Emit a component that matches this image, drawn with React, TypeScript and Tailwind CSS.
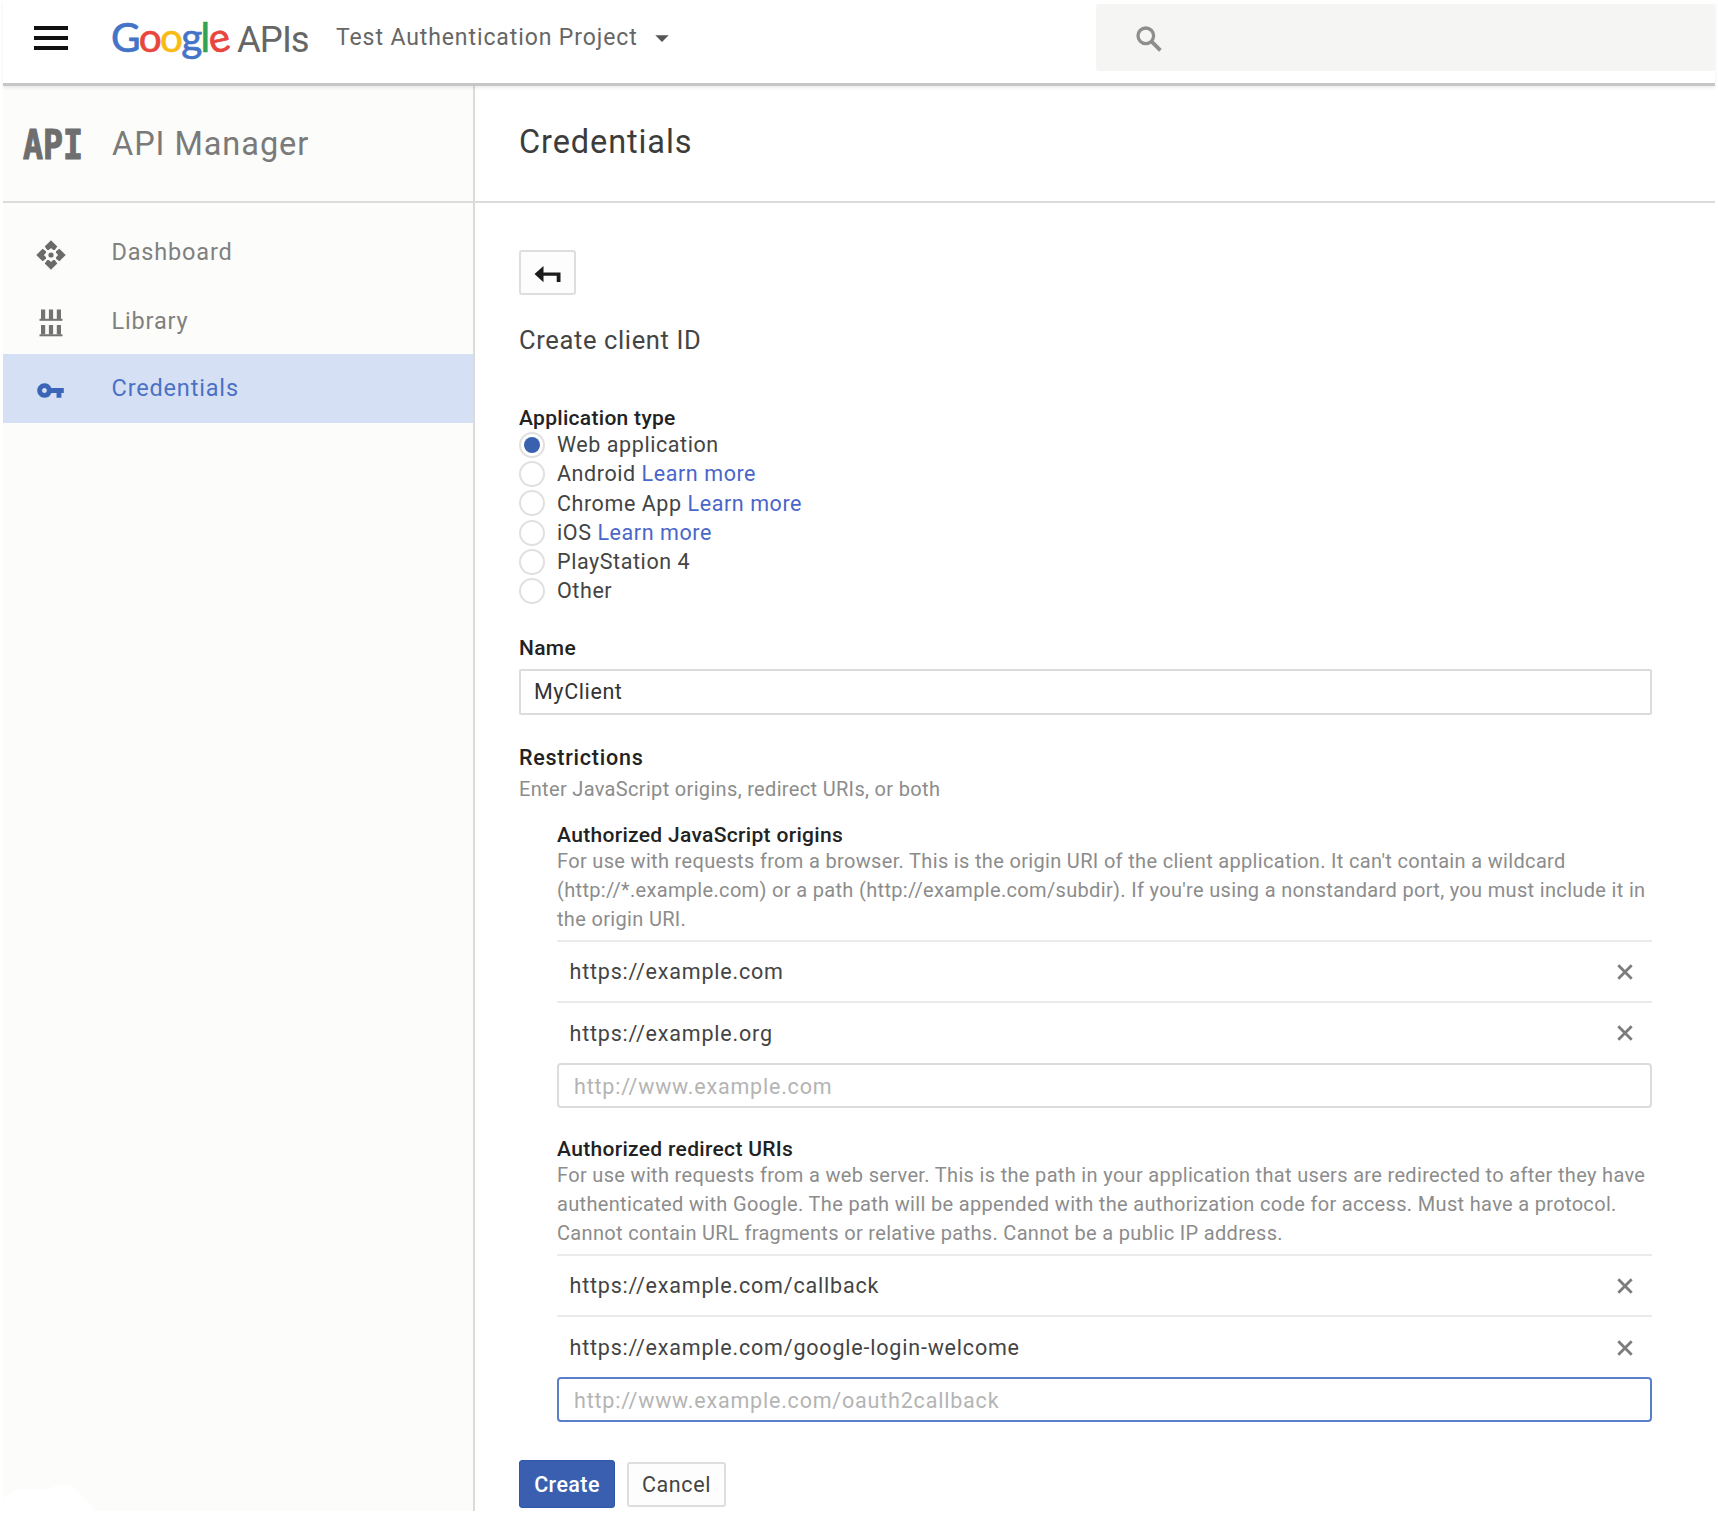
import React from "react";
import { MdVpnKey, MdArrowDropDown } from "react-icons/md";

function ApiDiamondIcon() {
  return (
    <svg width="30" height="30" viewBox="0 0 30 30" fill="#6b6b6b">
      {[0, 90, 180, 270].map((a) => (
        <path key={a} transform={`rotate(${a} 15 15)`} d="M15 0.3 L21.3 6.6 L18.8 10 L17.2 10 L15 7.9 L12.8 10 L11.2 10 L8.7 6.6 Z" />
      ))}
      <circle cx="15" cy="15" r="2.6" />
    </svg>
  );
}

function LibraryIcon() {
  return (
    <svg width="24" height="28" viewBox="0 0 24 28" fill="#737373">
      {[0, 15.5].map((y) => (
        <g key={y} transform={`translate(0 ${y})`}>
          <rect x="2" y="0.5" width="4.2" height="9.5" />
          <rect x="9.9" y="0.5" width="4.2" height="9.5" />
          <rect x="17.8" y="0.5" width="4.2" height="9.5" />
          <rect x="0.5" y="9.8" width="23" height="2" />
        </g>
      ))}
    </svg>
  );
}

function SearchIcon() {
  return (
    <svg width="26" height="26" viewBox="0 0 26 26" fill="none" stroke="#8e8e8e">
      <circle cx="9.8" cy="9.8" r="7.8" strokeWidth="3.3" />
      <path d="M15.4 15.4 L24.4 24.4" strokeWidth="3.8" />
    </svg>
  );
}

function GoogleWordmark() {
  return (
    <span className="flex font-['Lato'] text-[40.5px] leading-[50px] tracking-[-1.75px] [-webkit-text-stroke:0.7px_currentColor]">
      <span className="text-[#4374c8]">G</span>
      <span className="text-[#e8453c]">o</span>
      <span className="text-[#f9bb12]">o</span>
      <span className="text-[#4374c8]">g</span>
      <span className="text-[#32a350]">l</span>
      <span className="-rotate-12 text-[#e8453c]">e</span>
    </span>
  );
}

function NavItem({ icon, label, active = false }: { icon: React.ReactNode; label: string; active?: boolean }) {
  return (
    <div className={`flex h-[68.2px] items-center ${active ? "bg-[#d6e0f4] text-[#4a72c4]" : "pt-[2px] text-[#808080]"}`}>
      <span className="flex w-[95px] shrink-0 justify-center pt-[4px]">{icon}</span>
      <span className="pl-[13.5px] text-[23.5px] tracking-[0.83px]">{label}</span>
    </div>
  );
}

function Radio({ label, link = false, checked = false }: { label: string; link?: boolean; checked?: boolean }) {
  return (
    <div className="flex h-[29.2px] items-center text-[21.5px] tracking-[0.57px] text-[#444]">
      <span className="mr-[12px] flex size-[26px] shrink-0 items-center justify-center rounded-full border-2 border-[#e0e0e0] bg-white">
        {checked && <span className="size-4 rounded-full bg-[#3a61b0]" />}
      </span>
      <span className="pt-[0.6px]">
        {label}
        {link && <span className="text-[#4a66c8]"> Learn more</span>}
      </span>
    </div>
  );
}

function UriSection({ title, lines, uris, placeholder, focused = false }: { title: string; lines: string[]; uris: string[]; placeholder: string; focused?: boolean }) {
  return (
    <section className="ml-[38px]">
      <h3 className="h-[26px] text-[21px] leading-[26px] font-medium tracking-[0.32px] text-[#222]">{title}</h3>
      <div className="-mt-[1px] mb-[5.4px] text-[20px] leading-[29.1px] tracking-[0.33px] whitespace-nowrap text-[#8c8c8c]">
        {lines.map((l) => (
          <p key={l}>{l}</p>
        ))}
      </div>
      {uris.map((u) => (
        <div key={u} className="flex h-[61.5px] items-center justify-between border-t-2 border-[#ebebeb] pr-[19.5px] pl-[12.5px] text-[21.5px] tracking-[0.8px] text-[#444]">
          <span className="pt-[2px]">{u}</span>
          <svg className="mt-[1px]" width="16" height="16" viewBox="0 0 16 16" stroke="#7c7c7c" strokeWidth="2.8">
            <path d="M1.3 1.3 L14.7 14.7 M14.7 1.3 L1.3 14.7" />
          </svg>
        </div>
      ))}
      <div className={`flex h-[45px] items-center rounded-[4px] border-2 pt-[4px] pl-[15px] text-[21.5px] tracking-[0.8px] text-[#b4b4b4] ${focused ? "border-[#5a7fca]" : "border-[#dcdcdc]"}`}>
        {placeholder}
      </div>
    </section>
  );
}

export default function App() {
  return (
    <div className="flex h-[1514px] w-[1718px] flex-col overflow-hidden bg-white font-['Roboto',sans-serif]">
      <header className="relative z-10 mr-[3px] ml-[3px] flex h-[86px] shrink-0 items-start border-b-[3px] border-[#c6c6c6] bg-white shadow-[0_2px_3px_rgba(0,0,0,0.08)]">
        <div className="mt-[26px] ml-[31px] flex w-[34px] flex-col gap-[6px]">
          <span className="h-1 bg-[#111]" />
          <span className="h-1 bg-[#111]" />
          <span className="h-1 bg-[#111]" />
        </div>
        <div className="mt-[12px] ml-[43px] flex w-[225px] items-baseline whitespace-nowrap">
          <GoogleWordmark />
          <span className="ml-[9px] text-[36.5px] tracking-[-1px] text-[#666]">APIs</span>
        </div>
        <div className="mt-[22px] flex items-center text-[23px] leading-[30px] tracking-[0.9px] text-[#666]">
          Test Authentication Project
          <MdArrowDropDown className="ml-[8px] size-[32px] text-[#555]" />
        </div>
        <div className="mt-[4px] ml-auto h-[67px] w-[619px] rounded-[3px] bg-[#f5f5f4] pt-[21.5px] pl-[39.5px]">
          <SearchIcon />
        </div>
      </header>

      <div className="flex h-[1425px] shrink-0">
        <aside className="relative ml-[3px] w-[472px] shrink-0 border-r-2 border-[#dadada] bg-[#fcfcfa]">
          <div className="flex h-[117px] items-center border-b-2 border-[#dcdcdc] pt-[2px]">
            <span className="ml-[19.5px] w-[89.5px] shrink-0">
              <span className="inline-block origin-left scale-x-[0.83] font-['DejaVu_Sans_Mono'] text-[40px] leading-[50px] font-bold text-[#6e6e6e] [-webkit-text-stroke:1.2px_currentColor]">API</span>
            </span>
            <span className="text-[32.5px] tracking-[0.95px] text-[#7a7a7a]">API Manager</span>
          </div>
          <nav className="pt-[15px]">
            <NavItem icon={<ApiDiamondIcon />} label="Dashboard" />
            <NavItem icon={<LibraryIcon />} label="Library" />
            <NavItem icon={<MdVpnKey className="size-[29px] text-[#3b66b8]" />} label="Credentials" active />
          </nav>
          <svg className="absolute bottom-0 left-0" width="90" height="28" viewBox="0 0 90 28" fill="#fff">
            <path d="M0 28 L0 16 Q8 6 20 6 L46 6 Q56 0 68 2 L90 24 L90 28 Z" />
          </svg>
        </aside>

        <main className="min-w-0 flex-1">
          <div className="mr-[3px] flex h-[117px] items-center border-b-2 border-[#dcdcdc] pb-[2px] pl-[44px]">
            <h1 className="text-[32.5px] tracking-[0.9px] text-[#3c3c3c]">Credentials</h1>
          </div>
          <div className="ml-[44px] w-[1133px] pt-[47px]">
            <button className="flex h-[45px] w-[57px] items-center justify-center rounded-[3px] border-2 border-[#dedede] bg-[#fdfdfd] pt-[4px]">
              <svg width="27" height="17" viewBox="0 0 27 17" fill="#1c1c1c">
                <path d="M0.5 8 L9.5 0 L9.5 6.4 L26.5 6.4 L26.5 16 L22.7 16 L22.7 9.8 L9.5 9.8 L9.5 16.2 Z" />
              </svg>
            </button>
            <h2 className="mt-[29px] text-[25.5px] leading-[32px] tracking-[0.63px] text-[#444]">Create client ID</h2>

            <h3 className="mt-[48.5px] text-[21px] leading-[26px] font-medium tracking-[0.3px] text-[#222]">Application type</h3>
            <Radio label="Web application" checked />
            <Radio label="Android" link />
            <Radio label="Chrome App" link />
            <Radio label="iOS" link />
            <Radio label="PlayStation 4" />
            <Radio label="Other" />

            <h3 className="mt-[29.8px] text-[21px] leading-[26px] font-medium tracking-[0.3px] text-[#222]">Name</h3>
            <div className="mt-[7.5px] flex h-[46px] items-center rounded-[2px] border-2 border-[#dcdcdc] pt-[1px] pl-[13px] text-[21.5px] tracking-[0.6px] text-[#333]">MyClient</div>

            <h3 className="mt-[30px] text-[21.5px] leading-[26px] font-medium tracking-[0.75px] text-[#222]">Restrictions</h3>
            <p className="mt-[3.7px] mb-[18.4px] text-[20px] leading-[29px] tracking-[0.33px] text-[#8c8c8c]">Enter JavaScript origins, redirect URIs, or both</p>

            <UriSection
              title="Authorized JavaScript origins"
              lines={[
                "For use with requests from a browser. This is the origin URI of the client application. It can't contain a wildcard",
                "(http://*.example.com) or a path (http://example.com/subdir). If you're using a nonstandard port, you must include it in",
                "the origin URI.",
              ]}
              uris={["https://example.com", "https://example.org"]}
              placeholder="http://www.example.com"
            />
            <div className="h-[28.5px]" />
            <UriSection
              title="Authorized redirect URIs"
              lines={[
                "For use with requests from a web server. This is the path in your application that users are redirected to after they have",
                "authenticated with Google. The path will be appended with the authorization code for access. Must have a protocol.",
                "Cannot contain URL fragments or relative paths. Cannot be a public IP address.",
              ]}
              uris={["https://example.com/callback", "https://example.com/google-login-welcome"]}
              placeholder="http://www.example.com/oauth2callback"
              focused
            />

            <div className="mt-[38.2px] flex items-center gap-[12px] text-[21.5px] tracking-[0.4px]">
              <button className="h-[48px] w-[96px] rounded-[3px] border border-[#2f56a8] bg-[#3a5fb0] pt-[2px] font-medium text-white">Create</button>
              <button className="h-[45px] w-[99px] rounded-[3px] border-2 border-[#dedede] bg-[#fdfdfd] pt-[2px] tracking-[0.6px] text-[#444]">Cancel</button>
            </div>
          </div>
        </main>
      </div>
    </div>
  );
}
